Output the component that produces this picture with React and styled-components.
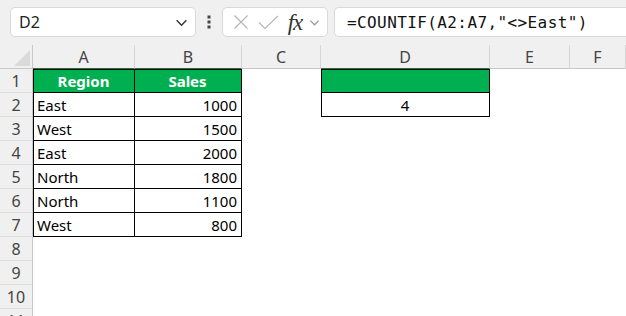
import React from "react";
import styled, { createGlobalStyle } from "styled-components";

const Global = createGlobalStyle`
  html, body { margin: 0; padding: 0; background: #fff; }
  #root { width: 626px; height: 316px; overflow: hidden; }
`;

const Page = styled.div`
  width: 626px;
  height: 316px;
  overflow: hidden;
  background: #f0f0f0;
  font-family: "Noto Sans", "Liberation Sans", sans-serif;
`;

const Toolbar = styled.div`
  height: 45px;
  display: flex;
  align-items: flex-start;
  padding: 7px 0 0 10px;
  box-sizing: border-box;
`;

const Box = styled.div`
  height: 30px;
  box-sizing: border-box;
  background: #fff;
  border: 1px solid #d9d9d9;
  border-radius: 5px;
  display: flex;
  align-items: center;
`;

const NameBox = styled(Box)`
  width: 186px;
  padding: 0 7px 0 8px;
  justify-content: space-between;
  font-size: 16px;
  color: #222;
`;

const Dots = styled.div`
  width: 26px;
  height: 30px;
  display: flex;
  align-items: center;
  justify-content: center;
`;

const FxBox = styled(Box)`
  width: 106px;
  padding: 0 0 0 6px;
  gap: 0;
`;

const IconSlot = styled.span`
  display: flex;
  align-items: center;
  justify-content: center;
  width: ${(p) => p.$w}px;
`;

const FxLabel = styled.span`
  font-family: "Liberation Serif", serif;
  font-style: italic;
  font-size: 23px;
  line-height: 1;
  color: #333;
  width: 24px;
  text-align: center;
  letter-spacing: -1px;
`;

const FormulaBox = styled(Box)`
  flex: 1;
  margin-left: 6px;
  border-right: none;
  border-radius: 5px 0 0 5px;
  padding-left: 12px;
  font-family: "DejaVu Sans Mono", "Liberation Mono", monospace;
  font-size: 16px;
  letter-spacing: 0.4px;
  color: #111;
`;

const Sheet = styled.div`
  display: grid;
  grid-template-columns: 33px 102px 107px 79px 169px 80px 56px;
  grid-auto-rows: 24px;
  background: #fff;
`;

const Corner = styled.div`
  background: #f0f0f0;
  border-bottom: 1px solid #c8c8c8;
  border-right: 1px solid #c8c8c8;
  box-sizing: border-box;
  display: flex;
  align-items: flex-end;
  justify-content: flex-end;
  padding: 0 2px 2px 0;
`;

const ColHead = styled.div`
  background: #f0f0f0;
  box-sizing: border-box;
  border-right: 1px solid #d6d6d6;
  border-bottom: 1px solid ${(p) => (p.$active ? "#217346" : "#c8c8c8")};
  display: flex;
  align-items: center;
  justify-content: center;
  font-size: 16px;
  color: #444;
`;

const RowHead = styled.div`
  background: #f0f0f0;
  box-sizing: border-box;
  border-right: 1px solid #c8c8c8;
  border-bottom: 1px solid #dcdcdc;
  display: flex;
  align-items: center;
  justify-content: center;
  font-size: 16px;
  color: #444;
`;

const Cell = styled.div`
  box-sizing: border-box;
  display: flex;
  align-items: center;
  padding: 0 4px 0 3px;
  font-size: 15px;
  color: #000;
  white-space: nowrap;
  background: ${(p) => (p.$fill ? "#00b050" : "#fff")};
  justify-content: ${(p) =>
    p.$align === "right" ? "flex-end" : p.$align === "center" ? "center" : "flex-start"};
  ${(p) => p.$bold && "font-weight: 700; color: #fff;"}
  ${(p) =>
    p.$boxed &&
    `border-right: 1px solid #000; border-bottom: 1px solid #000;`}
  ${(p) => p.$left && "border-left: 1px solid #000;"}
  ${(p) => p.$top && "border-top: 1px solid #000;"}
`;

const Chevron = ({ size = 12, color = "#333" }) => (
  <svg width={size} height={size} viewBox="0 0 12 12">
    <path d="M1.5 4l4.5 4.5L10.5 4" fill="none" stroke={color} strokeWidth="1.3" />
  </svg>
);

const rows = [
  ["East", 1000],
  ["West", 1500],
  ["East", 2000],
  ["North", 1800],
  ["North", 1100],
  ["West", 800],
];

const cols = ["A", "B", "C", "D", "E", "F"];

export default function App() {
  const body = [];
  for (let r = 1; r <= 11; r++) {
    body.push(<RowHead key={`h${r}`}>{r}</RowHead>);
    if (r === 1) {
      body.push(
        <Cell key="a1" $fill $bold $boxed $left $top $align="center">Region</Cell>,
        <Cell key="b1" $fill $bold $boxed $top $align="center">Sales</Cell>,
        <Cell key="c1" />,
        <Cell key="d1" $fill $boxed $left $top />,
        <Cell key="e1" />,
        <Cell key="f1" />
      );
    } else if (r <= 7) {
      const [region, sales] = rows[r - 2];
      body.push(
        <Cell key={`a${r}`} $boxed $left>{region}</Cell>,
        <Cell key={`b${r}`} $boxed $align="right">{sales}</Cell>,
        <Cell key={`c${r}`} />,
        r === 2 ? (
          <Cell key="d2" $boxed $left $align="center">4</Cell>
        ) : (
          <Cell key={`d${r}`} />
        ),
        <Cell key={`e${r}`} />,
        <Cell key={`f${r}`} />
      );
    } else {
      cols.forEach((c) => body.push(<Cell key={`${c}${r}`} />));
    }
  }

  return (
    <Page>
      <Global />
      <Toolbar>
        <NameBox>
          <span>D2</span>
          <Chevron size={13} />
        </NameBox>
        <Dots>
          <svg width="4" height="14" viewBox="0 0 4 14">
            <rect x="0.5" y="0.5" width="3" height="3" fill="#444" />
            <rect x="0.5" y="5.5" width="3" height="3" fill="#444" />
            <rect x="0.5" y="10.5" width="3" height="3" fill="#444" />
          </svg>
        </Dots>
        <FxBox>
          <IconSlot $w={24}>
            <svg width="16" height="16" viewBox="0 0 16 16">
              <path d="M1.5 1.5l13 13M14.5 1.5l-13 13" stroke="#b4b4b4" strokeWidth="1.1" fill="none" />
            </svg>
          </IconSlot>
          <IconSlot $w={30}>
            <svg width="21" height="15" viewBox="0 0 21 15">
              <path d="M1 7.5l6 6L20 1" stroke="#b4b4b4" strokeWidth="1.1" fill="none" />
            </svg>
          </IconSlot>
          <FxLabel>fx</FxLabel>
          <IconSlot $w={14}>
            <Chevron size={11} color="#999" />
          </IconSlot>
        </FxBox>
        <FormulaBox>=COUNTIF(A2:A7,"&lt;&gt;East")</FormulaBox>
      </Toolbar>
      <Sheet>
        <Corner>
          <svg width="16" height="16" viewBox="0 0 16 16">
            <path d="M16 0V16H0Z" fill="#dadada" />
          </svg>
        </Corner>
        {cols.map((c) => (
          <ColHead key={c} $active={c === "A" || c === "B" || c === "D"}>
            {c}
          </ColHead>
        ))}
        {body}
      </Sheet>
    </Page>
  );
}
